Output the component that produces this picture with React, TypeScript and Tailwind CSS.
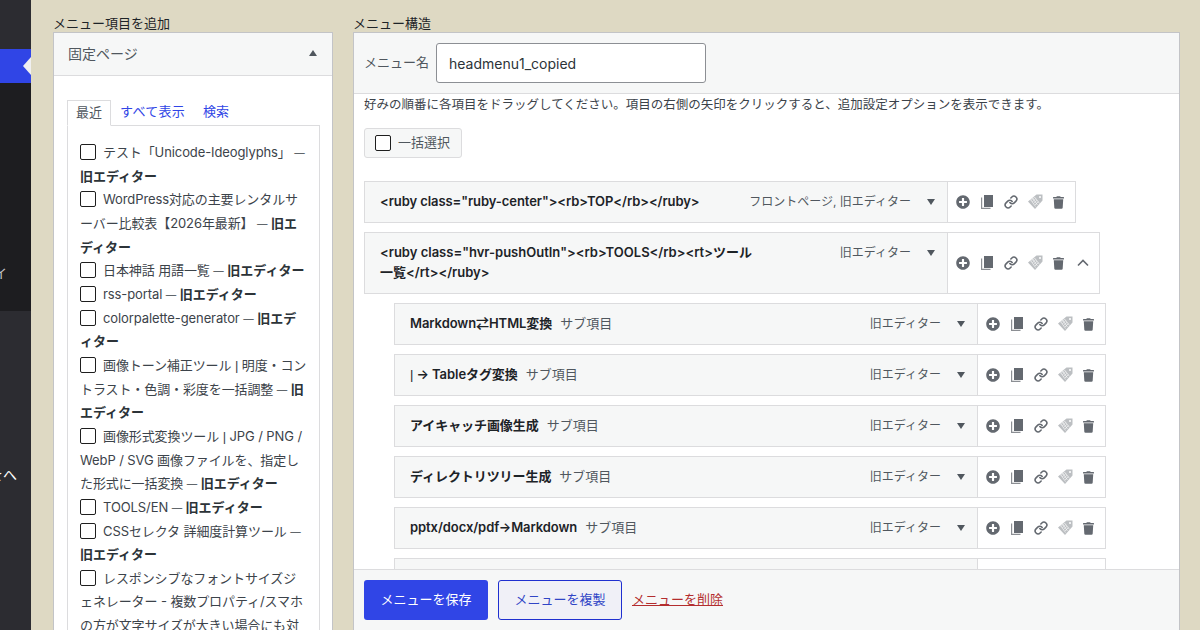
import React from "react"
import {FaPlusCircle, FaTrash} from "react-icons/fa"
import {Link as LinkIcon} from "lucide-react"

const font = "font-['Inter','Noto_Sans_CJK_JP',sans-serif]"

const pages: {before: string; pipe?: string; text?: string; tail?: boolean}[] = [
  {before: "テスト「Unicode-Ideoglyphs」 ", tail: true},
  {before: "WordPress対応の主要レンタルサーバー比較表【2026年最新】 ", tail: true},
  {before: "日本神話 用語一覧 ", tail: true},
  {before: "rss-portal ", tail: true},
  {before: "colorpalette-generator ", tail: true},
  {before: "画像トーン補正ツール ", pipe: "|", text: " 明度・コントラスト・色調・彩度を一括調整 ", tail: true},
  {before: "画像形式変換ツール ", pipe: "|", text: " JPG / PNG / WebP / SVG 画像ファイルを、指定した形式に一括変換 ", tail: true},
  {before: "TOOLS/EN ", tail: true},
  {before: "CSSセレクタ 詳細度計算ツール ", tail: true},
  {before: "レスポンシブなフォントサイズジェネレーター - 複数プロパティ/スマホの方が文字サイズが大きい場合にも対応"},
]

const subItems = ["Markdown⇄HTML変換", "| → Tableタグ変換", "アイキャッチ画像生成", "ディレクトリツリー生成", "pptx/docx/pdf→Markdown"]

const Box = () => <span className="inline-block w-4 h-4 mr-[7px] align-[-3px] rounded-[2px] border border-[#1e1e1e] bg-white" />

const Actions = ({up}: {up?: boolean}) => (
  <div className="flex items-center text-[#646970]">
    <FaPlusCircle className="w-[14px] h-[14px]" />
    <svg className="ml-[11px] w-[12px] h-[14px]" viewBox="0 0 12 14" fill="currentColor">
      <path d="M3 0h9v12H3z" />
      <path d="M0 2.5h1.2v10.3h8.3V14H0z" fill="#8c8f94" />
    </svg>
    <LinkIcon className="ml-[11px] w-[14px] h-[14px]" strokeWidth={2.7} />
    <svg className="ml-[10px] w-[15px] h-[15px] -mt-[1px] text-[#bcbfc2]" viewBox="0 0 15 15" fill="currentColor">
      <path d="M8.5 0.5h6v6L7 15 0 7.5z" />
      <path d="M3 6.5l3-3M4.3 8l3.4-3.4M5.7 9.5l3.4-3.4M7 11l3.4-3.4M2.5 5.5l5 7M4.5 4l5 7M6.5 3l5 6.5" stroke="#fff" strokeWidth="0.6" />
      <circle cx="12" cy="3" r="1" fill="#fff" />
    </svg>
    <FaTrash className="ml-[10px] w-[11px] h-[13px]" />
    {up && (
      <svg className="w-[12px] h-[12px] ml-[13px]" viewBox="0 0 12 12" fill="none" stroke="currentColor" strokeWidth="1.6">
        <path d="M1 8.5L6 3.5l5 5" />
      </svg>
    )}
  </div>
)

const Tri = ({up}: {up?: boolean}) => (
  <span className={`inline-block w-0 h-0 border-x-[4px] border-x-transparent ${up ? "border-b-[6px] border-b-[#50575e]" : "border-t-[6px] border-t-[#50575e]"}`} />
)

const SubRow = ({title}: {title: string}) => (
  <div className="flex h-[42px] mb-[9px] ml-[30px] w-[712px]">
    <div className="w-[584px] border border-[#dcdcde] bg-[#f6f7f7] flex items-center pl-[15px] pr-[12px]">
      <span className="font-semibold text-[#1d2327] tracking-[-0.07px]">
        {title.startsWith("|") ? <><span className="font-['Liberation_Sans'] font-normal">|</span>{title.slice(1)}</> : title}
      </span>
      <span className="ml-2 text-[#50575e]">{title && "サブ項目"}</span>
      <span className="ml-auto text-[12px] text-[#50575e]">旧エディター</span>
      <span className="ml-[16px] flex"><Tri /></span>
    </div>
    <div className="flex-1 border border-l-0 border-[#dcdcde] flex items-center pl-[8px]">
      <Actions />
    </div>
  </div>
)

export default function App() {
  return (
    <div className={`flex w-[1200px] h-[630px] overflow-hidden bg-[#ded9c3] text-[13px] text-[#3c434a] ${font}`}>
      <aside className="w-[31px] shrink-0 flex flex-col bg-[#1d1d20] text-white overflow-hidden">
        <div className="h-[49px] bg-[#2c2c31]" />
        <div className="h-[34px] bg-[#3045e6] flex items-center justify-end">
          <span className="w-0 h-0 border-y-[9px] border-y-transparent border-r-[8px] border-r-[#f0f0f1]" />
        </div>
        <div className="h-[228px] flex flex-col justify-end pb-[31px] text-[#c3c4c7]">
          <span className="block -ml-[6px] leading-none">イ</span>
        </div>
        <div className="flex-1 bg-[#2c2c31] pt-[157px]">
          <span className="block -ml-[11px] leading-none text-[14px] whitespace-nowrap">をへ</span>
        </div>
      </aside>

      <main className="flex-1 flex gap-5 pl-[22px] pr-5 pt-[15px]">
        <section className="w-[280px] shrink-0 flex flex-col">
          <h2 className="h-[17px] leading-[17px] font-normal text-[#1d2327]">メニュー項目を追加</h2>
          <div className="flex-1 border border-[#c3c4c7] border-b-0 bg-white">
            <div className="h-[43px] pb-[2px] flex items-center justify-between pl-[14px] pr-[15px] bg-[#f6f7f7] border-b border-[#dcdcde] text-[14px] text-[#50575e]">
              固定ページ
              <Tri up />
            </div>
            <div className="pl-[13px] pr-[12px] pt-[24px]">
              <div className="flex h-[26px] items-center -mb-px">
                <span className="h-[26px] leading-[23px] px-[8px] border border-[#dcdcde] border-b-white text-[#50575e] relative">最近</span>
                <a className="ml-[9px] -mt-[2px] text-[#3045e6] tracking-[0.3px]">すべて表示</a>
                <a className="ml-[18px] -mt-[2px] text-[#3045e6]">検索</a>
              </div>
              <div className="h-[520px] border border-[#dcdcde] pl-[12px] pr-[12px] pt-[15px] overflow-hidden leading-[23.65px]">
                {pages.map(p => (
                  <div key={p.before} className="tracking-[-0.1px]">
                    <Box />
                    {p.before}
                    {p.pipe && <span className="font-['Liberation_Sans'] leading-none">{p.pipe}</span>}
                    {p.text}
                    {p.tail && (
                      <>
                        <span className="text-[10.5px] leading-none">—</span>{" "}
                        <b className="font-semibold text-[#2c3338] tracking-normal">旧エディター</b>
                      </>
                    )}
                  </div>
                ))}
              </div>
            </div>
          </div>
        </section>

        <section className="w-[827px] shrink-0 flex flex-col">
          <h2 className="h-[17px] leading-[17px] font-normal text-[#1d2327]">メニュー構造</h2>
          <div className="flex-1 min-h-0 flex flex-col border border-[#c3c4c7] border-b-0 bg-white">
            <div className="h-[61px] shrink-0 flex items-center pl-[10px] bg-[#f6f7f7] border-b border-[#dcdcde]">
              <span className="text-[#50575e]">メニュー名</span>
              <input
                className="ml-[7px] w-[270px] h-[40px] px-3 border border-[#8c8f94] rounded-[3px] bg-white text-[14px] text-[#2c3338]"
                defaultValue="headmenu1_copied"
              />
            </div>
            <div className="flex-1 min-h-0 overflow-hidden pl-[10px]">
              <p className="h-[20px] leading-[22px] text-[12.5px] whitespace-nowrap text-[#3c434a]">好みの順番に各項目をドラッグしてください。項目の右側の矢印をクリックすると、追加設定オプションを表示できます。</p>
              <div className="mt-[14px] w-[98px] h-[30px] flex items-center pl-[10px] bg-[#f6f7f7] border border-[#dcdcde] rounded-[3px] text-[#50575e]">
                <Box />
                一括選択
              </div>

              <div className="mt-[23px] flex h-[42px] mb-[9px] w-[712px]">
                <div className="w-[584px] border border-[#dcdcde] bg-[#f6f7f7] flex items-center pl-[15px] pr-[12px]">
                  <span className="font-semibold text-[#1d2327] tracking-[-0.07px]">{'<ruby class="ruby-center"><rb>TOP</rb></ruby>'}</span>
                  <span className="ml-auto text-[12px] text-[#50575e]">フロントページ, 旧エディター</span>
                  <span className="ml-[16px] flex"><Tri /></span>
                </div>
                <div className="w-[128px] border border-l-0 border-[#dcdcde] flex items-center pl-[8px]">
                  <Actions />
                </div>
              </div>

              <div className="flex h-[62px] mb-[9px]">
                <div className="w-[584px] border border-[#dcdcde] bg-[#f6f7f7] flex pl-[15px] pr-[12px] pt-[9px]">
                  <span className="w-[380px] font-semibold text-[#1d2327] leading-[20px] break-all">{'<ruby class="hvr-pushOutIn"><rb>TOOLS</rb><rt>ツール一覧</rt></ruby>'}</span>
                  <span className="ml-auto mt-px text-[12px] text-[#50575e] leading-[20px]">旧エディター</span>
                  <span className="ml-[16px] mt-[8px] flex h-[6px]"><Tri /></span>
                </div>
                <div className="w-[152px] border border-l-0 border-[#dcdcde] flex items-center pl-[8px]">
                  <Actions up />
                </div>
              </div>

              {subItems.map(t => <SubRow key={t} title={t} />)}
              <SubRow title="" />
            </div>
            <div className="h-[61px] shrink-0 flex items-center pl-[10px] pb-px bg-[#f6f7f7] border-t border-[#dcdcde]">
              <button className="w-[124px] h-[40px] rounded-[3px] bg-[#3045e6] text-white">メニューを保存</button>
              <button className="ml-[10px] w-[124px] h-[40px] rounded-[3px] border border-[#1f30d0] bg-[#f0f0f7] text-[#3045c6]">メニューを複製</button>
              <a className="ml-[10px] text-[#b32d2e] underline">メニューを削除</a>
            </div>
          </div>
        </section>
      </main>
    </div>
  )
}
